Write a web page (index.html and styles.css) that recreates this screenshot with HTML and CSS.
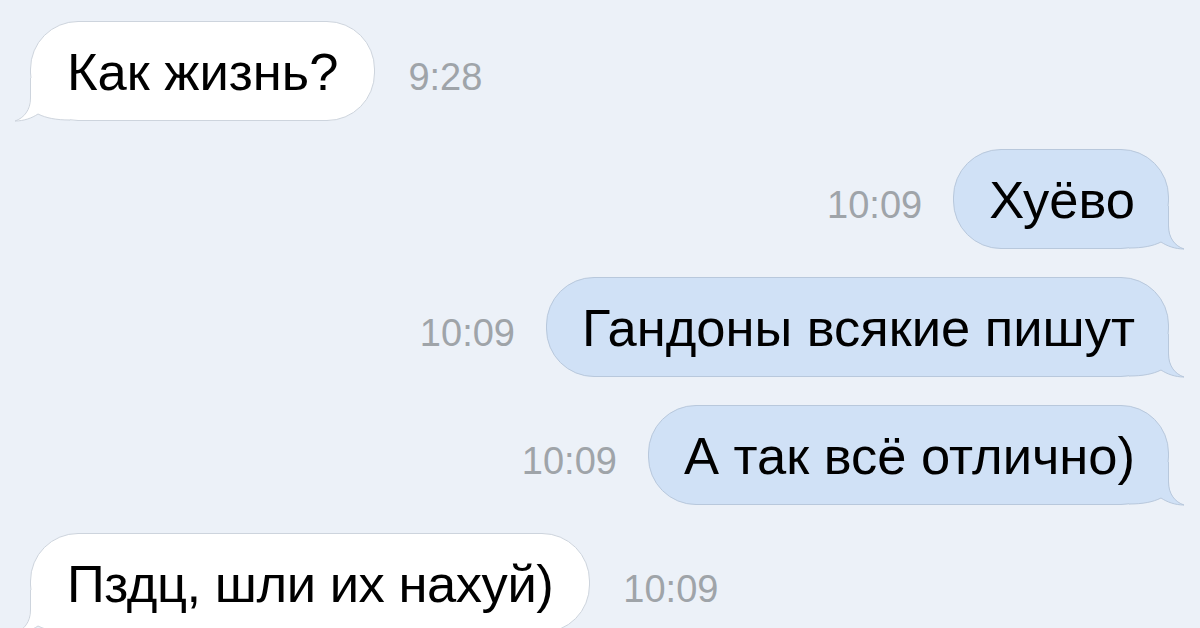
FILE: index.html
```html
<!DOCTYPE html>
<html>

<head>
    <meta charset="UTF-8">
    <meta name="viewport" content="width=device-width, initial-scale=1.0">
    <title>Диалог</title>
    <link rel="stylesheet" href="styles.css">
</head>

<body>
    <div class="chat">
        <div class="row in">
            <div class="bubble">
                <svg class="tail" viewBox="0 0 70 44" width="70" height="44">
                    <path class="tail-fill" d="M16,0 L16,20 C16,32 10,40 1,43 C10,43 18,40 24,36 C32,40 42,42 56,42 L56,0 Z"/>
                    <path class="tail-line" d="M16.5,0 L16.5,20 C16.5,32 10,40 1,43 C10,43 18,40 24,36 C32,40 42,42 56,42"/>
                </svg>
                <span class="text">Как жизнь?</span>
            </div>
            <span class="time">9:28</span>
        </div>

        <div class="row out">
            <span class="time">10:09</span>
            <div class="bubble">
                <svg class="tail" viewBox="0 0 70 44" width="70" height="44">
                    <path class="tail-fill" d="M16,0 L16,20 C16,32 10,40 1,43 C10,43 18,40 24,36 C32,40 42,42 56,42 L56,0 Z"/>
                    <path class="tail-line" d="M16.5,0 L16.5,20 C16.5,32 10,40 1,43 C10,43 18,40 24,36 C32,40 42,42 56,42"/>
                </svg>
                <span class="text">Хуёво</span>
            </div>
        </div>

        <div class="row out">
            <span class="time">10:09</span>
            <div class="bubble">
                <svg class="tail" viewBox="0 0 70 44" width="70" height="44">
                    <path class="tail-fill" d="M16,0 L16,20 C16,32 10,40 1,43 C10,43 18,40 24,36 C32,40 42,42 56,42 L56,0 Z"/>
                    <path class="tail-line" d="M16.5,0 L16.5,20 C16.5,32 10,40 1,43 C10,43 18,40 24,36 C32,40 42,42 56,42"/>
                </svg>
                <span class="text">Гандоны всякие пишут</span>
            </div>
        </div>

        <div class="row out">
            <span class="time">10:09</span>
            <div class="bubble">
                <svg class="tail" viewBox="0 0 70 44" width="70" height="44">
                    <path class="tail-fill" d="M16,0 L16,20 C16,32 10,40 1,43 C10,43 18,40 24,36 C32,40 42,42 56,42 L56,0 Z"/>
                    <path class="tail-line" d="M16.5,0 L16.5,20 C16.5,32 10,40 1,43 C10,43 18,40 24,36 C32,40 42,42 56,42"/>
                </svg>
                <span class="text">А так всё отлично)</span>
            </div>
        </div>

        <div class="row in">
            <div class="bubble">
                <svg class="tail" viewBox="0 0 70 44" width="70" height="44">
                    <path class="tail-fill" d="M16,0 L16,20 C16,32 10,40 1,43 C10,43 18,40 24,36 C32,40 42,42 56,42 L56,0 Z"/>
                    <path class="tail-line" d="M16.5,0 L16.5,20 C16.5,32 10,40 1,43 C10,43 18,40 24,36 C32,40 42,42 56,42"/>
                </svg>
                <span class="text tight">Пздц, шли их нахуй)</span>
            </div>
            <span class="time">10:09</span>
        </div>
    </div>
</body>
</html>
```

FILE: styles.css
```css
body {
    margin: 0;
    background-color: #ecf1f8;
    font-family: "Liberation Sans", Arial, sans-serif;
    overflow: hidden;
}

.chat {
    display: flex;
    flex-direction: column;
    gap: 28px;
    padding: 21px 31px 0 30px;
}

.row {
    display: flex;
    align-items: baseline;
    gap: 33px;
}

.row.out {
    justify-content: flex-end;
    gap: 31px;
}

.bubble {
    position: relative;
    display: flex;
    align-items: center;
    height: 100px;
    box-sizing: border-box;
    padding: 0 36px;
    border-radius: 48px;
    border: 1px solid #cdd4dd;
    background-color: #ffffff;
}

.out .bubble {
    padding: 0 33px 0 35px;
    background-color: #d0e1f6;
    border-color: #b8c8dc;
}

.text {
    position: relative;
    font-size: 52.5px;
    color: #000;
    white-space: nowrap;
}

.tight {
    letter-spacing: -0.45px;
}

.time {
    font-size: 38px;
    color: #9fa4a9;
}

.tail {
    position: absolute;
    left: -17px;
    bottom: -2px;
}

.out .tail {
    left: auto;
    right: -17px;
    transform: scaleX(-1);
}

.tail-fill {
    fill: #ffffff;
}

.tail-line {
    fill: none;
    stroke: #cdd4dd;
    stroke-width: 1;
}

.out .tail-fill {
    fill: #d0e1f6;
}

.out .tail-line {
    stroke: #b8c8dc;
}
```
